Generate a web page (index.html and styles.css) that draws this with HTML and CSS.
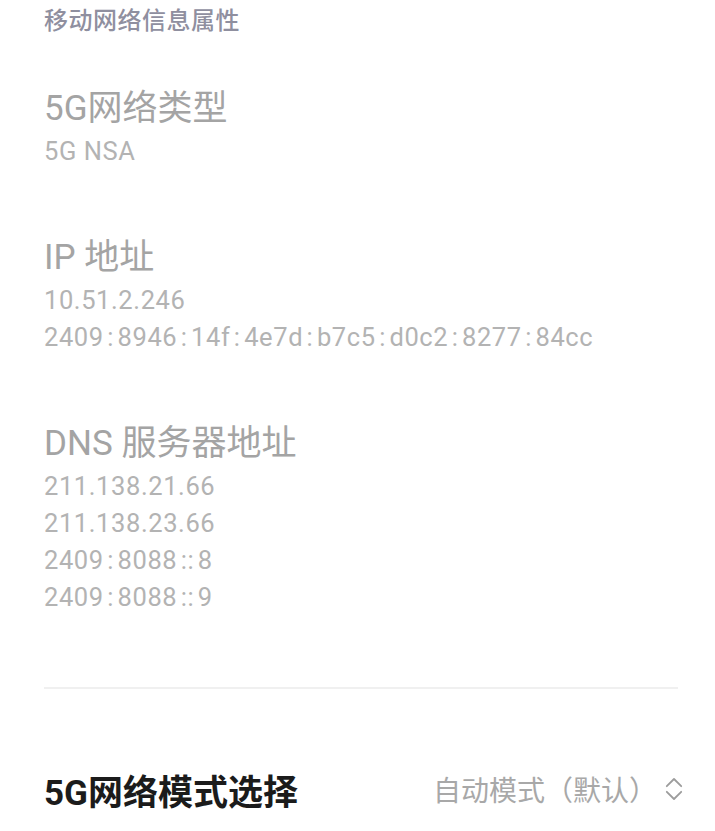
FILE: index.html
```html
<!DOCTYPE html>
<html lang="zh-CN">
<head>
<meta charset="utf-8">
<title>移动网络信息属性</title>
<link rel="stylesheet" href="styles.css">
</head>
<body>
<div class="page">
  <div class="header">移动网络信息属性</div>

  <section class="group first">
    <div class="title">5G网络类型</div>
    <div class="value">5G NSA</div>
  </section>

  <section class="group">
    <div class="title">IP 地址</div>
    <div class="value">10.51.2.246</div>
    <div class="value">2409<span class="c">:</span>8946<span class="c">:</span>14f<span class="c">:</span>4e7d<span class="c">:</span>b7c5<span class="c">:</span>d0c2<span class="c">:</span>8277<span class="c">:</span>84cc</div>
  </section>

  <section class="group">
    <div class="title">DNS 服务器地址</div>
    <div class="value">211.138.21.66</div>
    <div class="value">211.138.23.66</div>
    <div class="value">2409<span class="c">:</span>8088<span class="c">::</span>8</div>
    <div class="value">2409<span class="c">:</span>8088<span class="c">::</span>9</div>
  </section>

  <div class="divider"></div>

  <div class="row">
    <div class="row-title">5G网络模式选择</div>
    <div class="row-value">
      <span>自动模式（默认）</span>
      <svg class="chevron" width="18" height="26" viewBox="0 0 18 26" aria-hidden="true">
        <path d="M1.8 10.2 L9 3 L16.2 10.2" />
        <path d="M1.8 15.8 L9 23 L16.2 15.8" />
      </svg>
    </div>
  </div>
</div>
</body>
</html>
```

FILE: styles.css
```css
html, body {
  margin: 0;
  padding: 0;
  background: #ffffff;
}

body {
  font-family: Roboto, "Noto Sans CJK SC", sans-serif;
}

.page {
  padding: 0 32px 0 44px;
}

.header {
  font-family: "Noto Sans CJK SC", sans-serif;
  font-size: 24px;
  font-weight: 500;
  letter-spacing: 0.5px;
  line-height: 38px;
  height: 38px;
  color: #8f8f9f;
}

.group {
  margin-top: 64px;
}

.group.first {
  margin-top: 47px;
}

.title {
  font-size: 35px;
  line-height: 48px;
  color: #a4a4a4;
}

.value {
  font-size: 25.5px;
  line-height: 37px;
  letter-spacing: 0.6px;
  color: #b3b3b3;
}

.value .c {
  margin: 0 3.5px;
}

.divider {
  margin-top: 71px;
  margin-right: 5px;
  height: 2px;
  background: #f0f0f0;
}

.row {
  margin-top: 70px;
  height: 60px;
  display: flex;
  align-items: center;
  justify-content: space-between;
}

.row-title {
  font-size: 35px;
  font-weight: 700;
  color: #1b1b1b;
}

.row-value {
  display: flex;
  align-items: center;
  gap: 8px;
  font-family: "Noto Sans CJK SC", sans-serif;
  font-size: 28px;
  color: #a8a8a8;
}

.chevron path {
  fill: none;
  stroke: #9c9c9c;
  stroke-width: 1.8;
  stroke-linecap: round;
  stroke-linejoin: round;
}
```
